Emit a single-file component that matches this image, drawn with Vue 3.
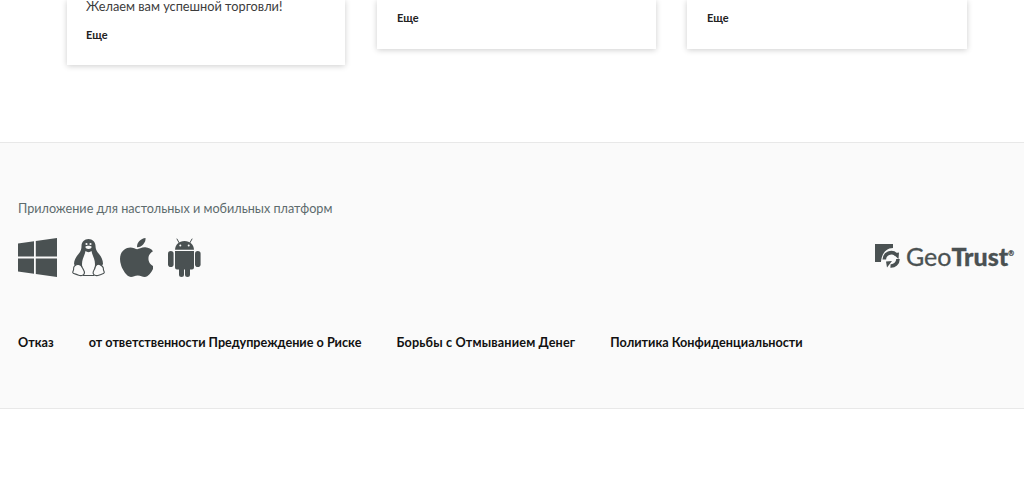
<template>
  <div class="page">
    <section class="news">
      <article v-for="card in cards" :key="card.id" class="card">
        <p v-if="card.text" class="card__text">{{ card.text }}</p>
        <a class="card__more">Еще</a>
      </article>
    </section>

    <footer class="footer">
      <div class="footer__top">
        <div class="apps">
          <div class="apps__title">Приложение для настольных и мобильных платформ</div>
          <div class="apps__icons">
            <svg width="39" height="39" viewBox="0 0 39 39">
              <path fill="#4a5152" d="M0 5.6 16 3.3V18.4H0ZM17.8 3 39 0V18.4H17.8ZM0 20.4H16V35.7L0 33.4ZM17.8 20.4H39V39L17.8 36Z" />
            </svg>
            <svg width="33" height="39" viewBox="0 0 33 39">
              <path fill="#4a5152" d="M16.500 1C20.500 1 23.500 4 23.500 8C23.500 11 24.500 13 27 16C29.500 19 31 22 31 26L28 31H5L2 26C2 22 4 19 6.500 16C9 13 9.500 11 9.500 8C9.500 4 12.500 1 16.500 1Z" />
              <path fill="#fafafa" d="M13.500 13C15 14.500 18 14.500 19.500 13C20.500 18 23 21 23 26C23 32 20 36.500 16.500 36.500C13 36.500 10 32 10 26C10 21 12.500 18 13.500 13Z" />
              <path fill="#fafafa" d="M13.500 8.500c1-1 5-1 6 0 .6 1-1 2.500-3 2.500s-3.600-1.500-3-2.500Z" />
              <circle cx="14.500" cy="6" r="1.100" fill="#fafafa" />
              <circle cx="18.500" cy="6" r="1.100" fill="#fafafa" />
              <path fill="none" stroke="#4a5152" stroke-width="1" d="M11 37.500H22" />
              <path fill="#fafafa" stroke="#4a5152" stroke-width="1.100" d="M5.500 26.500C7.500 26 9.500 27.500 10.500 30C11.500 32 13 33.500 12.300 35.500C11.500 38 8.500 38 6 36.900C4 36 .7 35.800.7 34.500C.7 33.300 1.800 32.500 1.600 31C1.400 28.500 3.500 27 5.500 26.500ZM27.500 26.500C25.500 25.500 23.500 27 23 30C22.500 32 20.500 33.500 21.200 35.500C22 38 25 38 27.500 36.900C29.500 36 32.300 35.800 32.300 34.500C32.300 33.300 31.200 32.500 31.400 31C31.600 28.500 29.500 27.500 27.500 26.500Z" />
            </svg>
            <svg width="33" height="39" viewBox="4 32 365 448" preserveAspectRatio="none">
              <path fill="#4a5152" d="M318.700 268.700c-.2-36.700 16.400-64.400 50-84.800-18.800-26.900-47.200-41.700-84.700-44.600-35.500-2.800-74.300 20.700-88.500 20.700-15 0-49.400-19.700-76.400-19.700C63.300 141.200 4 184.800 4 273.500q0 39.300 14.400 81.200c12.800 36.700 59 126.700 107.200 125.200 25.200-.6 43-17.900 75.800-17.900 31.800 0 48.300 17.900 76.400 17.900 48.600-.7 90.400-82.500 102.600-119.300-65.200-30.700-61.700-90-61.700-91.900zm-56.600-164.200c27.300-32.400 24.800-61.900 24-72.500-24.100 1.400-52 16.400-67.900 34.900-17.500 19.800-27.800 44.300-25.600 71.900 26.100 2 49.900-11.400 69.500-34.300z" />
            </svg>
            <svg width="33" height="39" viewBox="0 0 33 39">
              <g fill="#4a5152">
                <rect x="0" y="13" width="5.600" height="16" rx="2.800" />
                <rect x="27" y="13" width="5.600" height="16" rx="2.800" />
                <path d="M7 13H26V29.500a2 2 0 0 1-2 2H22V36.500a2.500 2.500 0 0 1-5 0V31.500H16V36.500a2.500 2.500 0 0 1-5 0V31.500H9a2 2 0 0 1-2-2Z" />
                <path d="M7 11.800C7.200 6.500 11 3 16.500 3S25.800 6.500 26 11.800Z" />
              </g>
              <path stroke="#4a5152" stroke-width="1" stroke-linecap="round" d="M11 4.600 9 1M22 4.600 24 1" />
              <circle cx="12.300" cy="7.600" r="1" fill="#fafafa" />
              <circle cx="20.700" cy="7.600" r="1" fill="#fafafa" />
            </svg>
          </div>
        </div>

        <div class="geotrust">
          <svg width="27" height="24" viewBox="0 0 27 24">
            <path fill="#4a5152" d="M1 0H19V4C12 4 7.500 10 7 18H1Z" />
            <path fill="none" stroke="#4a5152" stroke-width="3.600" d="M10.300 15.500a7 7 0 0 1 11.700-5M24 15a7 7 0 0 1-7.500 7" />
            <path fill="#4a5152" d="M18.500 9.500 25 8.500 24.500 15ZM18 17 12 17.500 13 23.500Z" />
          </svg>
          <span class="geotrust__name">Geo<b>Trust</b><sup>®</sup></span>
        </div>
      </div>

      <nav class="links">
        <a v-for="link in links" :key="link" class="links__item">{{ link }}</a>
      </nav>
    </footer>
  </div>
</template>

<script setup>
const cards = [
  { id: 1, text: 'Желаем вам успешной торговли!' },
  { id: 2, text: '' },
  { id: 3, text: '' }
]

const links = [
  'Отказ',
  'от ответственности Предупреждение о Риске',
  'Борьбы с Отмыванием Денег',
  'Политика Конфиденциальности'
]
</script>

<style scoped>
.page {
  height: 494px;
  overflow: hidden;
  background: #fff;
  font-family: Lato, "Open Sans", sans-serif;
}

.news {
  display: flex;
  align-items: flex-start;
  gap: 31px;
  height: 142px;
  padding-left: 67px;
  box-sizing: border-box;
}

.card {
  width: 279px;
  height: 49px;
  padding: 0 20px;
  box-sizing: border-box;
  background: #fff;
  box-shadow: 0 1px 6px rgba(0, 0, 0, 0.2);
}

.card:first-child {
  width: 278px;
  height: 65px;
  margin-right: 1px;
  padding-left: 19px;
}

.card:last-child {
  width: 280px;
}

.card__text {
  margin: 0;
  padding-bottom: 15px;
  font-size: 12.75px;
  line-height: 13px;
  color: #3c3c3c;
}

.card__more {
  display: block;
  padding-top: 11px;
  font-size: 11px;
  line-height: 14px;
  font-weight: 700;
  color: #222;
}

.card:first-child .card__more {
  padding-top: 0;
}

.footer {
  height: 267px;
  padding: 58px 10px 0 18px;
  box-sizing: border-box;
  background: #fafafa;
  border-top: 1px solid #e8e8e8;
  border-bottom: 1px solid #e8e8e8;
}

.footer__top {
  display: flex;
  justify-content: space-between;
  align-items: flex-end;
}

.apps__title {
  font-size: 12.65px;
  line-height: 16px;
  color: #5d6b6d;
}

.apps__icons {
  display: flex;
  gap: 15px;
  margin-top: 21px;
}

.geotrust {
  display: flex;
  align-items: center;
  gap: 5px;
  margin-bottom: 8px;
}

.geotrust__name {
  font-size: 25px;
  line-height: 26px;
  color: #4a5152;
  -webkit-text-stroke: 0.3px #4a5152;
}

.geotrust__name b {
  font-weight: 900;
}

.geotrust__name sup {
  font-size: 7px;
  vertical-align: 10px;
  line-height: 0;
}

.links {
  display: flex;
  gap: 35px;
  margin-top: 58px;
}

.links__item {
  font-size: 12.65px;
  line-height: 16px;
  font-weight: 700;
  color: #111;
}

.links__item:nth-child(3) {
  letter-spacing: 0.16px;
}
</style>
